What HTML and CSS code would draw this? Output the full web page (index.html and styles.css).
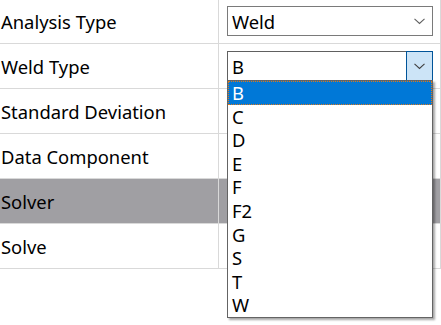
FILE: index.html
```html
<!DOCTYPE html>
<html>
<head>
<meta charset="utf-8">
<link rel="stylesheet" href="styles.css">
</head>
<body>
<div class="grid">
  <div class="row">
    <div class="label">Analysis Type</div>
    <div class="value">
      <div class="combo">
        <span class="combo-text">Weld</span>
        <span class="arrow"><svg width="11" height="7" viewBox="0 0 11 7"><polyline points="0.5,0.8 5.5,5.5 10.5,0.8" fill="none" stroke="#606060" stroke-width="1.1"/></svg></span>
      </div>
    </div>
  </div>
  <div class="row">
    <div class="label">Weld Type</div>
    <div class="value">
      <div class="combo open">
        <span class="combo-text">B</span>
        <span class="arrow btn"><svg width="11" height="7" viewBox="0 0 11 7"><polyline points="0.5,0.8 5.5,5.5 10.5,0.8" fill="none" stroke="#404040" stroke-width="1.1"/></svg></span>
      </div>
      <ul class="list">
        <li class="sel">B</li>
        <li>C</li>
        <li>D</li>
        <li>E</li>
        <li>F</li>
        <li>F2</li>
        <li>G</li>
        <li>S</li>
        <li>T</li>
        <li>W</li>
      </ul>
    </div>
  </div>
  <div class="row">
    <div class="label">Standard Deviation</div>
    <div class="value"></div>
  </div>
  <div class="row">
    <div class="label">Data Component</div>
    <div class="value"></div>
  </div>
  <div class="row active">
    <div class="label">Solver</div>
    <div class="value"></div>
  </div>
  <div class="row">
    <div class="label">Solve</div>
    <div class="value"></div>
  </div>
</div>
</body>
</html>
```
FILE: styles.css
```css
html, body {
  margin: 0;
  padding: 0;
  background: #ffffff;
}
body {
  font-family: "Noto Sans", "Open Sans", sans-serif;
  font-size: 18.4px;
  color: #000000;
  width: 441px;
  height: 325px;
  overflow: hidden;
}
.grid {
  margin-top: -1px;
  display: flex;
  flex-direction: column;
}
.row {
  display: grid;
  grid-template-columns: 219px 222px;
  height: 45px;
  box-sizing: border-box;
  border-bottom: 1px solid #d9d9d9;
}
.row.active {
  background: #a09fa3;
}
.label, .value {
  box-sizing: border-box;
  border-right: 1px solid #d9d9d9;
  display: flex;
  align-items: center;
}
.label {
  padding-left: 1px;
  white-space: nowrap;
}
.value {
  position: relative;
  padding: 0 7px 0 8px;
}
.combo {
  flex: 1;
  height: 30px;
  box-sizing: border-box;
  border: 1px solid #7a7a7a;
  display: flex;
  align-items: center;
  background: #ffffff;
}
.combo.open {
  border-color: #606060;
}
.combo-text {
  flex: 1;
  padding-left: 4px;
}
.arrow {
  width: 26px;
  height: 100%;
  display: flex;
  align-items: center;
  justify-content: center;
  box-sizing: border-box;
}
.arrow.btn {
  background: #cce4f7;
  border: 1px solid #005499;
  margin: -1px -1px -1px 0;
  height: 30px;
  width: 27px;
}
.list {
  position: absolute;
  left: 8px;
  right: 7px;
  top: 36px;
  margin: 0;
  padding: 0;
  list-style: none;
  background: #ffffff;
  border: 1px solid #646464;
  box-shadow: 2px 2px 2px rgba(0, 0, 0, 0.35);
  z-index: 5;
}
.list li {
  height: 23.6px;
  line-height: 23.6px;
  padding-left: 4px;
  box-sizing: border-box;
}
.list li.sel {
  background: #0078d7;
  color: #ffffff;
  outline: 1px dotted #e07a1a;
  outline-offset: -1px;
}
```
